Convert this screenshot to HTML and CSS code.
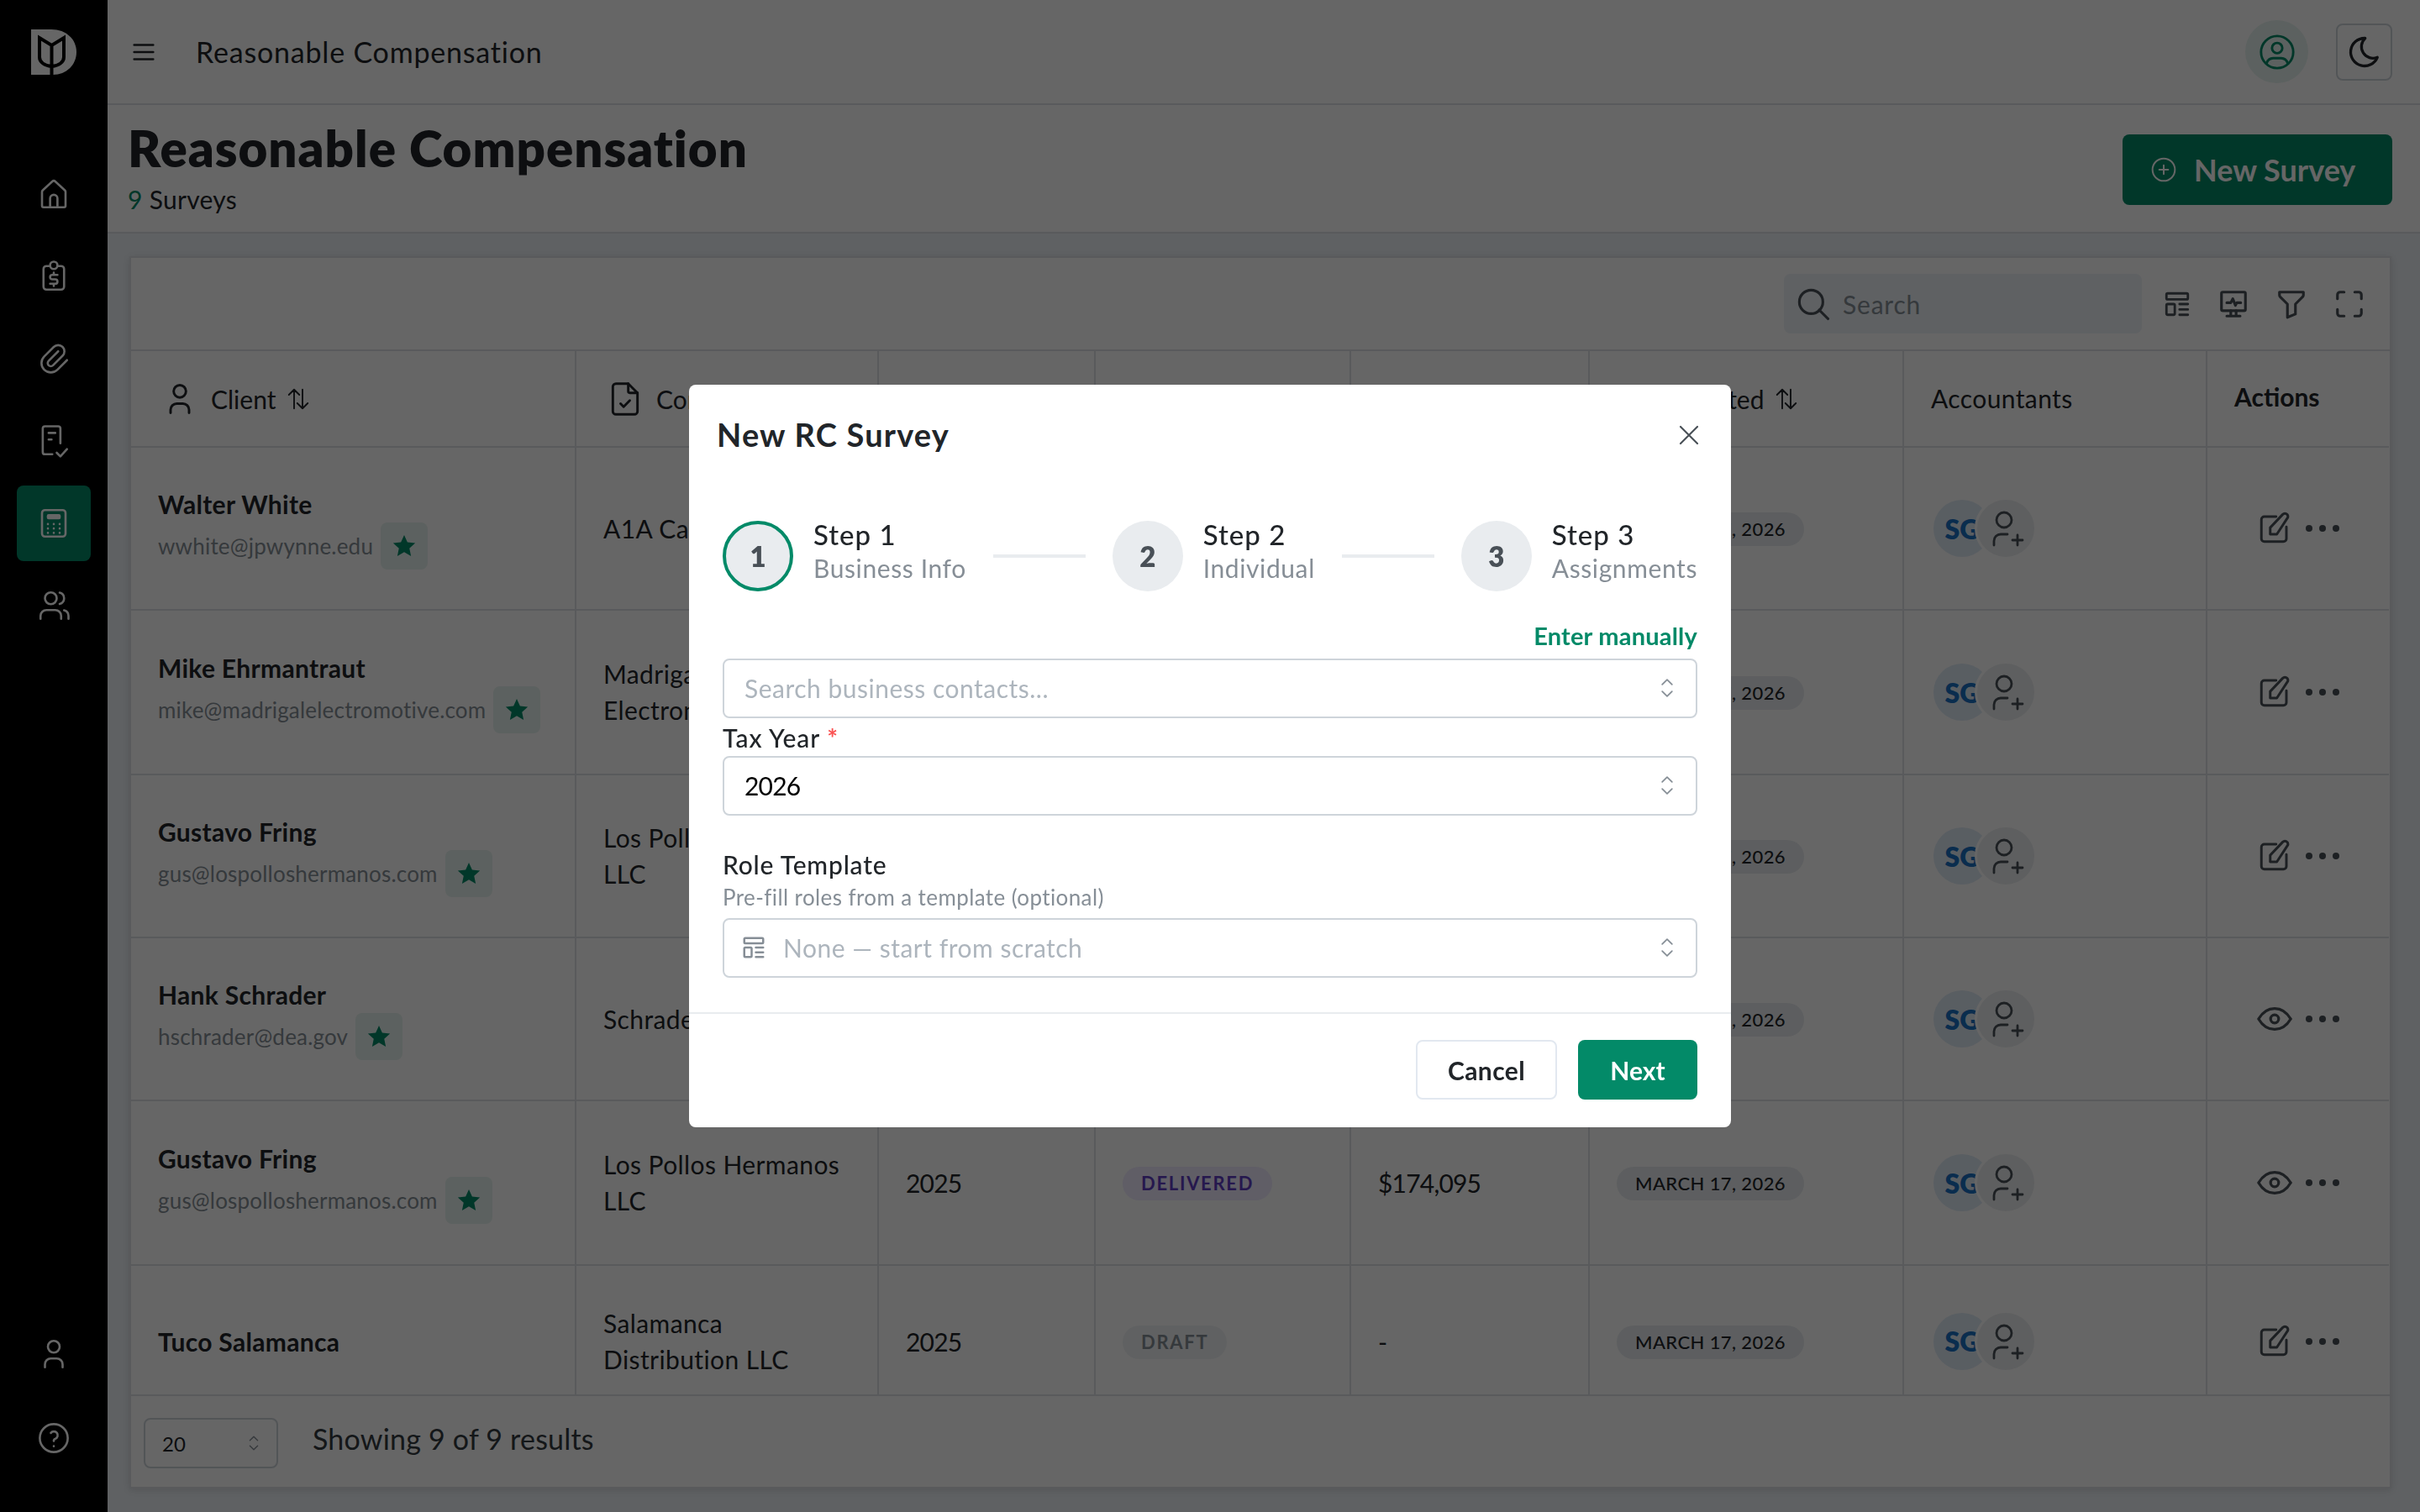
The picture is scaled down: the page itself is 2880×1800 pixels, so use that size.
FILE: index.html
```html
<!DOCTYPE html>
<html lang="en">
<head>
    <meta charset="UTF-8">
    <title>Reasonable Compensation</title>
    <link rel="stylesheet" href="styles.css">
</head>
<body>
    <svg class="sprite" xmlns="http://www.w3.org/2000/svg">
        <symbol id="i-home" viewBox="0 0 24 24"><path d="M4 20v-9.500a1.500 1.500 0 0 1 .5-1.100l6.500-6a1.500 1.500 0 0 1 2 0l6.500 6a1.500 1.500 0 0 1 .5 1.100v9.500a1 1 0 0 1-1 1h-14a1 1 0 0 1-1-1z"/><path d="M9.500 21v-6a2.500 2.500 0 0 1 5 0v6"/></symbol>
        <symbol id="i-money" viewBox="0 0 24 24"><path d="M9 5h-2a2 2 0 0 0-2 2v12a2 2 0 0 0 2 2h10a2 2 0 0 0 2-2v-12a2 2 0 0 0-2-2h-2"/><circle cx="12" cy="4.500" r="2.500"/><path d="M14.500 11h-3.500a1.500 1.500 0 0 0 0 3h2a1.500 1.500 0 0 1 0 3h-3.500M12 17v1.500M12 9.500v1.500"/></symbol>
        <symbol id="i-clip" viewBox="0 0 24 24"><path d="M15 7l-6.500 6.500a1.500 1.500 0 0 0 3 3l6.500-6.500a3 3 0 0 0-6-6l-6.500 6.500a4.500 4.500 0 0 0 9 9l6.500-6.500"/></symbol>
        <symbol id="i-doccheck" viewBox="0 0 24 24"><path d="M11 21h-5a1.500 1.500 0 0 1-1.500-1.500v-16a1.500 1.500 0 0 1 1.500-1.500h9a1.500 1.500 0 0 1 1.500 1.500v10"/><path d="M8.500 6.500h4.500M8.500 11h2M14 20l2.500 2.500l4.500-5"/></symbol>
        <symbol id="i-calc" viewBox="0 0 24 24"><rect x="4" y="3" width="16" height="18" rx="2"/><rect x="8" y="6.500" width="8" height="2" rx=".5" fill="currentColor"/><path d="M8 12.500v.01M12 12.500v.01M16 12.500v.01M8 15.500v.01M12 15.500v.01M16 15.500v.01M8 18.500v.01M12 18.500v.01M16 18.500v.01"/></symbol>
        <symbol id="i-users" viewBox="0 0 24 24"><circle cx="10" cy="7" r="4"/><path d="M3 21v-2a4 4 0 0 1 4-4h6a4 4 0 0 1 4 4v2M16 3.130a4 4 0 0 1 0 7.750M22 21v-2a4 4 0 0 0-3-3.850"/></symbol>
        <symbol id="i-user" viewBox="0 0 24 24"><circle cx="12" cy="7" r="4"/><path d="M6 21v-2a4 4 0 0 1 4-4h4a4 4 0 0 1 4 4v2"/></symbol>
        <symbol id="i-help" viewBox="0 0 24 24"><circle cx="12" cy="12" r="9.500"/><path d="M12 17.500v.01M12 14a1.500 1.500 0 0 1 1-1.500a2.600 2.600 0 1 0-3-4"/></symbol>
        <symbol id="i-menu" viewBox="0 0 24 24"><path d="M4 6h16M4 12h16M4 18h16"/></symbol>
        <symbol id="i-usercircle" viewBox="0 0 24 24"><circle cx="12" cy="12" r="10"/><circle cx="12" cy="9.500" r="3.200"/><path d="M5.500 18.800a4.500 4.500 0 0 1 4-3h5a4.500 4.500 0 0 1 4 3"/></symbol>
        <symbol id="i-moon" viewBox="0 0 24 24"><path d="M12 3c.132 0 .263 0 .393 0a7.500 7.500 0 0 0 7.920 12.446a9 9 0 1 1-8.313-12.454z"/></symbol>
        <symbol id="i-plus" viewBox="0 0 24 24"><circle cx="12" cy="12" r="10"/><path d="M8 12h8M12 8v8"/></symbol>
        <symbol id="i-search" viewBox="0 0 24 24"><circle cx="10.500" cy="10.500" r="8"/><path d="M22 22l-6-6"/></symbol>
        <symbol id="i-template" viewBox="0 0 24 24"><rect x="3" y="3" width="18" height="5" rx="1"/><rect x="3" y="12" width="7" height="9" rx="1"/><path d="M14 12h7M14 16.500h7M14 21h7"/></symbol>
        <symbol id="i-monitor" viewBox="0 0 24 24"><rect x="3" y="3" width="18" height="14" rx="1"/><path d="M7 21h10M10 17v4M14 17v4M7 11h3l1.500-3l2 5l1-2h3"/></symbol>
        <symbol id="i-filter" viewBox="0 0 24 24"><path d="M3 3h18v2.200a2 2 0 0 1-.586 1.414l-5.414 5.386v7.500l-6 2.500v-10l-5.480-5.500a2 2 0 0 1-.52-1.345z"/></symbol>
        <symbol id="i-expand" viewBox="0 0 24 24"><path d="M3 8v-3a2 2 0 0 1 2-2h3M3 16v3a2 2 0 0 0 2 2h3M16 3h3a2 2 0 0 1 2 2v3M16 21h3a2 2 0 0 0 2-2v-3"/></symbol>
        <symbol id="i-filecheck" viewBox="0 0 24 24"><path d="M14 2v5a1 1 0 0 0 1 1h5"/><path d="M18 22h-12a2 2 0 0 1-2-2v-16a2 2 0 0 1 2-2h8l6 6v12a2 2 0 0 1-2 2z"/><path d="M9 15l2 2l4-4"/></symbol>
        <symbol id="i-sort" viewBox="0 0 24 24"><path d="M8 21v-18M3 8l5-5l5 5M16 3v18M11 16l5 5l5-5"/></symbol>
        <symbol id="i-star" viewBox="0 0 24 24"><path class="solid" d="M12 1.500l3.100 6.900l7.400.8l-5.500 5l1.500 7.400l-6.500-3.800l-6.500 3.800l1.500-7.400l-5.500-5l7.400-.8z"/></symbol>
        <symbol id="i-edit" viewBox="0 0 24 24"><path d="M13 4h-8a2 2 0 0 0-2 2v13a2 2 0 0 0 2 2h13a2 2 0 0 0 2-2v-8"/><path d="M21 4.500a2.100 2.100 0 0 0-3.500-2l-8.500 9v4.500h4.500z"/></symbol>
        <symbol id="i-eye" viewBox="0 0 24 24"><circle cx="12" cy="12" r="2.500"/><path d="M22 12c-2.600 4.400-6 6.500-10 6.500s-7.400-2.100-10-6.500c2.600-4.400 6-6.500 10-6.500s7.400 2.100 10 6.500"/></symbol>
        <symbol id="i-addperson" viewBox="0 0 24 24"><circle cx="11" cy="7" r="4.500"/><path d="M16 19h6M19 16v6M5 22v-2.500a4 4 0 0 1 4-4h4"/></symbol>
        <symbol id="i-updown" viewBox="0 0 24 24"><path d="M7 8.500l5-5l5 5M17 15.500l-5 5l-5-5"/></symbol>
        <symbol id="i-close" viewBox="0 0 24 24"><path d="M20 4l-16 16M4 4l16 16"/></symbol>
    </svg>

    <div class="app">
        <aside class="sidebar">
            <div class="sidebar-top">
                <svg class="logo" viewBox="0 0 54 54">
                    <path class="logo-d" d="M0 0h24c18 0 30 12 30 27s-12 27-28 27h-26z"/>
                    <path class="logo-tulip" d="M10 10v23c0 6 6 10 14.500 11c8.500-1 14.500-5 14.500-11v-23l-14.500 9zM24.500 19v35"/>
                </svg>
                <nav class="nav">
                    <a class="nav-item"><svg class="nav-icon"><use href="#i-home"/></svg></a>
                    <a class="nav-item"><svg class="nav-icon"><use href="#i-money"/></svg></a>
                    <a class="nav-item"><svg class="nav-icon"><use href="#i-clip"/></svg></a>
                    <a class="nav-item"><svg class="nav-icon"><use href="#i-doccheck"/></svg></a>
                    <a class="nav-item active"><svg class="nav-icon"><use href="#i-calc"/></svg></a>
                    <a class="nav-item"><svg class="nav-icon"><use href="#i-users"/></svg></a>
                </nav>
            </div>
            <div class="nav nav-bottom">
                <a class="nav-item"><svg class="nav-icon"><use href="#i-user"/></svg></a>
                <a class="nav-item"><svg class="nav-icon"><use href="#i-help"/></svg></a>
            </div>
        </aside>

        <main class="main">
            <header class="topbar">
                <svg class="menu-icon"><use href="#i-menu"/></svg>
                <span class="topbar-title">Reasonable Compensation</span>
                <div class="topbar-right">
                    <span class="avatar-btn"><svg><use href="#i-usercircle"/></svg></span>
                    <span class="theme-btn"><svg><use href="#i-moon"/></svg></span>
                </div>
            </header>

            <section class="page-head">
                <div class="page-head-text">
                    <h1>Reasonable Compensation</h1>
                    <p class="count"><span class="count-num">9</span> Surveys</p>
                </div>
                <button class="new-btn"><svg><use href="#i-plus"/></svg>New Survey</button>
            </section>

            <section class="content">
                <div class="card">
                    <div class="toolbar">
                        <div class="search">
                            <svg><use href="#i-search"/></svg>
                            <span>Search</span>
                        </div>
                        <svg class="tool-icon tool-small"><use href="#i-template"/></svg>
                        <svg class="tool-icon"><use href="#i-monitor"/></svg>
                        <svg class="tool-icon"><use href="#i-filter"/></svg>
                        <svg class="tool-icon"><use href="#i-expand"/></svg>
                    </div>
                    <table class="grid">
                        <colgroup>
                            <col class="c-client"><col class="c-company"><col class="c-year"><col class="c-status">
                            <col class="c-value"><col class="c-date"><col class="c-acc"><col class="c-act">
                        </colgroup>
                        <thead>
                            <tr>
                                <th><span class="th-inner"><svg class="th-icon"><use href="#i-user"/></svg>Client <svg class="sort"><use href="#i-sort"/></svg></span></th>
                                <th><span class="th-inner"><svg class="th-icon"><use href="#i-filecheck"/></svg>Company</span></th>
                                <th>Tax Year</th>
                                <th>Status</th>
                                <th>Value</th>
                                <th><span class="th-inner">Date Created <svg class="sort"><use href="#i-sort"/></svg></span></th>
                                <th class="th-acc">Accountants</th>
                                <th class="th-actions">Actions</th>
                            </tr>
                        </thead>
                        <tbody>
                            <tr>
                                <td><div class="name">Walter White</div><div class="email-line"><span class="email">wwhite@jpwynne.edu</span><span class="star"><svg><use href="#i-star"/></svg></span></div></td>
                                <td class="company">A1A Car Wash</td><td></td><td></td><td></td>
                                <td><span class="pill">March 17, 2026</span></td>
                                <td><div class="people"><span class="initials">SG</span><span class="add-person"><svg><use href="#i-addperson"/></svg></span></div></td>
                                <td><div class="actions"><svg class="act-icon"><use href="#i-edit"/></svg><span class="dots"><i></i><i></i><i></i></span></div></td>
                            </tr>
                            <tr>
                                <td><div class="name">Mike Ehrmantraut</div><div class="email-line"><span class="email">mike@madrigalelectromotive.com</span><span class="star"><svg><use href="#i-star"/></svg></span></div></td>
                                <td class="company">Madrigal Electromotive</td><td></td><td></td><td></td>
                                <td><span class="pill">March 17, 2026</span></td>
                                <td><div class="people"><span class="initials">SG</span><span class="add-person"><svg><use href="#i-addperson"/></svg></span></div></td>
                                <td><div class="actions"><svg class="act-icon"><use href="#i-edit"/></svg><span class="dots"><i></i><i></i><i></i></span></div></td>
                            </tr>
                            <tr>
                                <td><div class="name">Gustavo Fring</div><div class="email-line"><span class="email">gus@lospolloshermanos.com</span><span class="star"><svg><use href="#i-star"/></svg></span></div></td>
                                <td class="company">Los Pollos Hermanos LLC</td><td></td><td></td><td></td>
                                <td><span class="pill">March 17, 2026</span></td>
                                <td><div class="people"><span class="initials">SG</span><span class="add-person"><svg><use href="#i-addperson"/></svg></span></div></td>
                                <td><div class="actions"><svg class="act-icon"><use href="#i-edit"/></svg><span class="dots"><i></i><i></i><i></i></span></div></td>
                            </tr>
                            <tr>
                                <td><div class="name">Hank Schrader</div><div class="email-line"><span class="email">hschrader@dea.gov</span><span class="star"><svg><use href="#i-star"/></svg></span></div></td>
                                <td class="company">Schrader Minerals</td><td></td><td></td><td></td>
                                <td><span class="pill">March 17, 2026</span></td>
                                <td><div class="people"><span class="initials">SG</span><span class="add-person"><svg><use href="#i-addperson"/></svg></span></div></td>
                                <td><div class="actions"><svg class="act-icon eye"><use href="#i-eye"/></svg><span class="dots"><i></i><i></i><i></i></span></div></td>
                            </tr>
                            <tr>
                                <td><div class="name">Gustavo Fring</div><div class="email-line"><span class="email">gus@lospolloshermanos.com</span><span class="star"><svg><use href="#i-star"/></svg></span></div></td>
                                <td class="company">Los Pollos Hermanos LLC</td><td class="plain">2025</td>
                                <td><span class="status delivered">Delivered</span></td>
                                <td class="plain">$174,095</td>
                                <td><span class="pill">March 17, 2026</span></td>
                                <td><div class="people"><span class="initials">SG</span><span class="add-person"><svg><use href="#i-addperson"/></svg></span></div></td>
                                <td><div class="actions"><svg class="act-icon eye"><use href="#i-eye"/></svg><span class="dots"><i></i><i></i><i></i></span></div></td>
                            </tr>
                            <tr>
                                <td><div class="name">Tuco Salamanca</div></td>
                                <td class="company">Salamanca Distribution LLC</td><td class="plain">2025</td>
                                <td><span class="status draft">Draft</span></td>
                                <td class="plain">-</td>
                                <td><span class="pill">March 17, 2026</span></td>
                                <td><div class="people"><span class="initials">SG</span><span class="add-person"><svg><use href="#i-addperson"/></svg></span></div></td>
                                <td><div class="actions"><svg class="act-icon"><use href="#i-edit"/></svg><span class="dots"><i></i><i></i><i></i></span></div></td>
                            </tr>
                        </tbody>
                    </table>
                    <div class="card-foot">
                        <div class="page-size"><span>20</span><svg><use href="#i-updown"/></svg></div>
                        <span class="results">Showing 9 of 9 results</span>
                    </div>
                </div>
            </section>
        </main>
    </div>

    <div class="overlay">
        <div class="modal">
            <div class="modal-head">
                <h2>New RC Survey</h2>
                <svg class="modal-close"><use href="#i-close"/></svg>
            </div>
            <div class="modal-body">
                <div class="stepper">
                    <div class="step">
                        <span class="step-circle current">1</span>
                        <div class="step-text"><div class="step-title">Step 1</div><div class="step-sub">Business Info</div></div>
                    </div>
                    <span class="step-line"></span>
                    <div class="step">
                        <span class="step-circle">2</span>
                        <div class="step-text"><div class="step-title">Step 2</div><div class="step-sub">Individual</div></div>
                    </div>
                    <span class="step-line"></span>
                    <div class="step">
                        <span class="step-circle">3</span>
                        <div class="step-text"><div class="step-title">Step 3</div><div class="step-sub">Assignments</div></div>
                    </div>
                </div>
                <div class="manual-row"><a class="manual">Enter manually</a></div>
                <div class="field">
                    <span class="muted-value">Search business contacts...</span>
                    <svg class="updown"><use href="#i-updown"/></svg>
                </div>
                <label class="field-label">Tax Year <span class="req">*</span></label>
                <div class="field">
                    <span class="field-value">2026</span>
                    <svg class="updown"><use href="#i-updown"/></svg>
                </div>
                <label class="field-label role-label">Role Template</label>
                <p class="field-desc">Pre-fill roles from a template (optional)</p>
                <div class="field field-icon">
                    <svg class="field-glyph"><use href="#i-template"/></svg>
                    <span class="muted-value">None — start from scratch</span>
                    <svg class="updown"><use href="#i-updown"/></svg>
                </div>
            </div>
            <div class="modal-foot">
                <button class="btn-cancel">Cancel</button>
                <button class="btn-next">Next</button>
            </div>
        </div>
    </div>
</body>
</html>
```

FILE: styles.css
```css
* {
    box-sizing: border-box;
}
body {
    margin: 0;
    height: 100vh;
    overflow: hidden;
    font-family: "Lato", "Noto Sans", sans-serif;
    color: #212529;
    background: #edf2f7;
}
svg {
    fill: none;
    stroke: currentColor;
    stroke-width: 2;
    stroke-linecap: round;
    stroke-linejoin: round;
}
.sprite {
    display: none;
}
.solid {
    fill: currentColor;
    stroke: none;
}
.app {
    display: flex;
    height: 100vh;
}

/* sidebar */
.sidebar {
    width: 128px;
    flex: none;
    background: #000;
    color: #fff;
    display: flex;
    flex-direction: column;
    justify-content: space-between;
    align-items: center;
    padding: 35px 0 43px;
}
.sidebar-top {
    display: flex;
    flex-direction: column;
    align-items: center;
}
.logo {
    width: 54px;
    height: 54px;
    margin-bottom: 97px;
}
.logo-d {
    fill: #fff;
    stroke: none;
}
.logo-tulip {
    stroke: #000;
    stroke-width: 4;
    stroke-linecap: butt;
    stroke-linejoin: miter;
}
.nav {
    display: flex;
    flex-direction: column;
    align-items: center;
    gap: 8px;
}
.nav-bottom {
    gap: 10px;
}
.nav-item {
    width: 88px;
    height: 90px;
    border-radius: 8px;
    display: flex;
    align-items: center;
    justify-content: center;
}
.nav-item.active {
    background: #038a68;
}
.nav-icon {
    width: 42px;
    height: 42px;
    stroke-width: 1.500;
}

/* top bar */
.main {
    flex: 1;
    min-width: 0;
    display: flex;
    flex-direction: column;
}
.topbar {
    height: 125px;
    flex: none;
    background: #fff;
    border-bottom: 2px solid #dee2e6;
    display: flex;
    align-items: center;
    padding: 0 33px 0 26px;
}
.menu-icon {
    width: 34px;
    height: 34px;
    stroke-width: 1.800;
}
.topbar-title {
    margin-left: 45px;
    font-size: 34px;
    letter-spacing: 0.8px;
}
.topbar-right {
    margin-left: auto;
    display: flex;
    align-items: center;
    gap: 33px;
}
.avatar-btn {
    width: 75px;
    height: 75px;
    border-radius: 50%;
    background: #e6f3ef;
    color: #038a68;
    display: flex;
    align-items: center;
    justify-content: center;
}
.avatar-btn svg {
    width: 46px;
    height: 46px;
    stroke-width: 1.500;
}
.theme-btn {
    width: 67px;
    height: 68px;
    border: 2px solid #ced4da;
    border-radius: 8px;
    display: flex;
    align-items: center;
    justify-content: center;
}
.theme-btn svg {
    width: 44px;
    height: 44px;
    stroke-width: 1.800;
}

/* page title */
.page-head {
    height: 153px;
    flex: none;
    background: #fff;
    border-bottom: 2px solid #dee2e6;
    display: flex;
    align-items: center;
    justify-content: space-between;
    padding: 0 33px 0 24px;
}
.page-head-text {
    margin-bottom: 6px;
}
.page-head h1 {
    margin: 0;
    font-size: 60px;
    font-weight: 800;
    line-height: 70px;
    letter-spacing: 1px;
}
.count {
    margin: 8px 0 0;
    font-size: 30px;
    line-height: 36px;
    letter-spacing: 0.3px;
}
.count-num {
    color: #038a68;
}
.new-btn {
    width: 321px;
    height: 84px;
    margin-top: 3px;
    border: none;
    border-radius: 8px;
    background: #038a68;
    color: #fff;
    font: 700 36px "Lato", sans-serif;
    display: flex;
    align-items: center;
    padding: 0 0 0 33px;
    gap: 20px;
}
.new-btn svg {
    width: 32px;
    height: 32px;
    stroke-width: 1.500;
}

/* card with table */
.content {
    flex: 1;
    padding: 27px 34px 28px 26px;
}
.card {
    height: 1467px;
    background: #fff;
    border: 2px solid #dee2e6;
    box-shadow: 0 2px 8px rgba(0, 0, 0, 0.12);
    display: flex;
    flex-direction: column;
}
.toolbar {
    height: 111px;
    flex: none;
    display: flex;
    align-items: center;
    justify-content: flex-end;
    padding-right: 29px;
    color: #495057;
    gap: 31px;
    border-bottom: 2px solid #dee2e6;
}
.search {
    width: 426px;
    height: 71px;
    background: #edf2f7;
    border-radius: 8px;
    display: flex;
    align-items: center;
    padding-left: 14px;
    gap: 14px;
    color: #868e96;
    font-size: 30px;
    letter-spacing: 0.8px;
    margin-right: -6px;
}
.search svg {
    width: 42px;
    height: 42px;
    color: #495057;
    stroke-width: 1.800;
}
.tool-icon {
    width: 38px;
    height: 38px;
}
.tool-small {
    width: 34px;
    height: 34px;
}
.grid {
    width: 2687px;
    border-collapse: collapse;
    table-layout: fixed;
    flex: none;
}
.c-client { width: 529px; }
.c-company { width: 360px; }
.c-year { width: 258px; }
.c-status { width: 304px; }
.c-value { width: 284px; }
.c-date { width: 374px; }
.c-acc { width: 361px; }
.c-act { width: 217px; }
.grid th, .grid td {
    border-right: 2px solid #dee2e6;
    border-bottom: 2px solid #dee2e6;
    padding: 0 32px;
    text-align: left;
    font-size: 30px;
    font-weight: 400;
}
.grid th:last-child, .grid td:last-child {
    border-right: none;
}
.grid thead tr {
    height: 114px;
}
.grid tbody tr {
    height: 194px;
}
.grid tbody tr:nth-child(3n+2) {
    height: 196px;
}
.grid tbody tr:last-child {
    height: 154px;
}
.grid tbody tr:last-child td {
    border-bottom: none;
    padding-top: 26px;
}
.grid td.company {
    line-height: 43px;
    letter-spacing: 0.4px;
}
.grid td.plain {
    letter-spacing: -0.8px;
}
.th-inner {
    display: flex;
    align-items: center;
    gap: 12px;
}
.th-icon {
    width: 44px;
    height: 44px;
    margin: 0 3px 0 4px;
    flex: none;
    stroke-width: 1.600;
}
.sort {
    width: 30px;
    height: 30px;
    flex: none;
    stroke-width: 1.500;
}
.grid th.th-acc {
    padding-bottom: 2px;
    letter-spacing: 0.4px;
}
.grid th.th-actions {
    font-weight: 700;
    padding-bottom: 6px;
}
.name {
    font-size: 30px;
    font-weight: 700;
    line-height: 40px;
    letter-spacing: 0.3px;
}
.email-line {
    display: flex;
    align-items: center;
    gap: 9px;
    margin-top: 2px;
}
.email {
    font-size: 26px;
    letter-spacing: 0.2px;
    color: #868e96;
}
.star {
    width: 56px;
    height: 56px;
    flex: none;
    border-radius: 8px;
    background: #e6f3ef;
    color: #038a68;
    display: flex;
    align-items: center;
    justify-content: center;
}
.star svg {
    width: 30px;
    height: 30px;
}
.pill {
    display: inline-block;
    height: 40px;
    line-height: 40px;
    padding: 0 22px;
    border-radius: 20px;
    background: #e9ecef;
    font-size: 22px;
    font-weight: 500;
    letter-spacing: 0.4px;
    white-space: nowrap;
    text-transform: uppercase;
}
.status {
    display: inline-block;
    height: 40px;
    line-height: 40px;
    padding: 0 22px;
    border-radius: 20px;
    font-size: 22px;
    font-weight: 700;
    letter-spacing: 1.700px;
    text-transform: uppercase;
}
.delivered {
    background: #efeaff;
    color: #5f3dc4;
}
.draft {
    background: #f1f3f5;
    color: #868e96;
}
.people {
    display: flex;
    margin-left: 3px;
}
.initials {
    width: 68px;
    height: 68px;
    border-radius: 50%;
    background: #dfeaf6;
    color: #1971c2;
    font-size: 32px;
    font-weight: 800;
    display: flex;
    align-items: center;
    justify-content: center;
}
.add-person {
    width: 74px;
    height: 74px;
    margin: -3px 0 -3px -19px;
    border: 3px solid #fff;
    border-radius: 50%;
    background: #eceef0;
    color: #495057;
    display: flex;
    align-items: center;
    justify-content: center;
}
.add-person svg {
    width: 48px;
    height: 48px;
    stroke-width: 1.400;
}
.actions {
    display: flex;
    align-items: center;
    gap: 16px;
    color: #495057;
    padding-left: 27px;
}
.act-icon {
    width: 42px;
    height: 42px;
    flex: none;
    stroke-width: 1.700;
}
.act-icon.eye {
    width: 46px;
    height: 46px;
    margin: 0 -2px;
}
.dots {
    display: flex;
    gap: 8px;
}
.dots i {
    width: 8px;
    height: 8px;
    border-radius: 50%;
    background: currentColor;
}
.card-foot {
    flex: 1;
    border-top: 2px solid #dee2e6;
    display: flex;
    align-items: center;
    padding-left: 15px;
    gap: 41px;
}
.page-size {
    width: 160px;
    height: 60px;
    margin-top: 4px;
    border: 2px solid #ced4da;
    border-radius: 8px;
    display: flex;
    align-items: center;
    justify-content: space-between;
    padding: 0 16px 0 20px;
    font-size: 24px;
}
.page-size svg {
    width: 22px;
    height: 22px;
    color: #868e96;
    stroke-width: 1.500;
}
.results {
    font-size: 34px;
    letter-spacing: 0.2px;
    color: #343a40;
    margin-bottom: 8px;
}

/* modal */
.overlay {
    position: fixed;
    inset: 0;
    background: rgba(0, 0, 0, 0.6);
    display: flex;
    align-items: center;
    justify-content: center;
}
.modal {
    width: 1240px;
    height: 884px;
    background: #fff;
    border-radius: 8px;
    display: flex;
    flex-direction: column;
}
.modal-head {
    height: 120px;
    flex: none;
    display: flex;
    align-items: center;
    justify-content: space-between;
    padding: 0 37px 0 33px;
}
.modal-head h2 {
    margin: 0 0 2px;
    font-size: 38px;
    font-weight: 700;
    letter-spacing: 1.200px;
}
.modal-close {
    width: 30px;
    height: 30px;
    margin-right: -2px;
    color: #495057;
    stroke-width: 1.700;
}
.modal-body {
    flex: 1;
    padding: 42px 40px 0;
    font-size: 30px;
}
.stepper {
    height: 84px;
    display: flex;
    align-items: center;
    gap: 32px;
}
.step {
    height: 84px;
    display: flex;
    align-items: center;
    gap: 24px;
}
.step-circle {
    width: 84px;
    height: 84px;
    flex: none;
    border-radius: 50%;
    background: #e9ecef;
    color: #495057;
    font-size: 33px;
    font-weight: 800;
    display: flex;
    align-items: center;
    justify-content: center;
}
.step-circle.current {
    border: 4px solid #038a68;
}
.step-text {
    padding-bottom: 12px;
}
.step-title {
    font-size: 33px;
    font-weight: 500;
    line-height: 38px;
    letter-spacing: 1px;
}
.step-sub {
    font-size: 30px;
    color: #868e96;
    line-height: 38px;
    margin-top: 2px;
    letter-spacing: 0.6px;
}
.step-line {
    flex: 1;
    height: 4px;
    background: #e9ecef;
}
.manual-row {
    display: flex;
    justify-content: flex-end;
    margin: 35px 0 9px;
    height: 36px;
    line-height: 36px;
}
.manual {
    color: #038a68;
    font-size: 29px;
    font-weight: 700;
    letter-spacing: 0.2px;
}
.field {
    height: 71px;
    border: 2px solid #ced4da;
    border-radius: 8px;
    display: flex;
    align-items: center;
    padding: 0 20px 2px 24px;
    font-size: 30px;
    color: #000;
}
.field .updown {
    margin-left: auto;
    width: 28px;
    height: 28px;
    color: #868e96;
    stroke-width: 1.500;
}
.field-value {
    letter-spacing: -0.8px;
}
.muted-value {
    color: #adb5bd;
    letter-spacing: 0.5px;
}
.field-glyph {
    width: 30px;
    height: 30px;
    color: #868e96;
    margin-right: 20px;
    flex: none;
}
.field-icon {
    padding-left: 20px;
}
.field-label {
    display: block;
    height: 45px;
    padding-top: 5px;
    line-height: 36px;
    font-size: 30px;
    font-weight: 500;
    letter-spacing: 1px;
}
.req {
    color: #fa5252;
    font-weight: 700;
}
.role-label {
    margin-top: 40px;
    height: 38px;
    padding-top: 0;
    letter-spacing: 0.8px;
}
.field-desc {
    margin: 3px 0 9px;
    height: 32px;
    line-height: 32px;
    font-size: 26px;
    letter-spacing: 0.4px;
    color: #868e96;
}
.modal-foot {
    height: 137px;
    flex: none;
    border-top: 2px solid #e9ecef;
    display: flex;
    justify-content: flex-end;
    align-items: flex-start;
    gap: 25px;
    padding: 31px 40px 0;
}
.btn-cancel, .btn-next {
    height: 71px;
    border-radius: 8px;
    font: 700 30px "Lato", sans-serif;
}
.btn-cancel {
    width: 168px;
    background: #fff;
    border: 2px solid #e2e8f0;
    color: #212529;
    letter-spacing: 0.4px;
}
.btn-next {
    width: 142px;
    border: none;
    background: #038a68;
    color: #fff;
}
```
